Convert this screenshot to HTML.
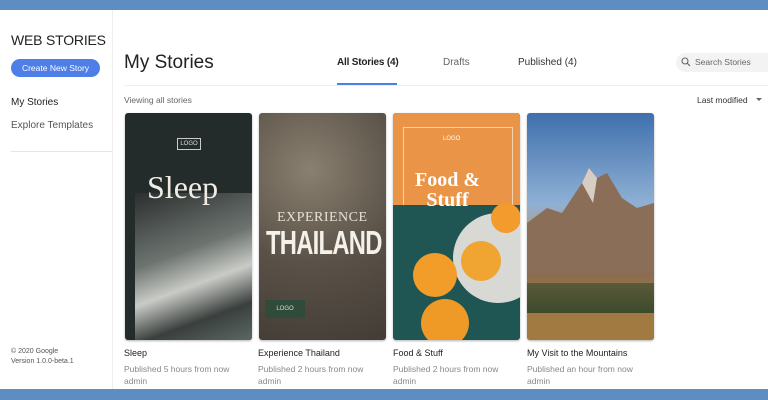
<!DOCTYPE html>
<html><head><meta charset="utf-8"><style>
*{margin:0;padding:0;box-sizing:border-box}
body{width:768px;height:400px;overflow:hidden;background:#fff;font-family:"Liberation Sans",Arial,sans-serif;position:relative;color:#222}
.bar{position:absolute;left:0;width:768px;background:#5e8dc2}
.a{position:absolute;white-space:nowrap}
.card{position:absolute;top:113px;width:127px;height:227px;border-radius:3px;overflow:hidden;box-shadow:0 1px 2px rgba(0,0,0,.3)}
.t{font-size:9px;color:#222}
.s{font-size:8.5px;color:#888}
</style></head><body>
<div class="bar" style="top:0;height:10px"></div>
<div class="bar" style="top:389px;height:11px"></div>
<div class="a" style="left:112px;top:10px;width:1px;height:379px;background:#eee"></div>
<div class="a" style="left:11px;top:32px;font-size:14px;color:#222;letter-spacing:-0.2px">WEB STORIES</div>
<div class="a" style="left:11px;top:59px;width:89px;height:18px;border-radius:9px;background:#4e7ee8;color:#fff;font-size:8.5px;text-align:center;line-height:18px">Create New Story</div>
<div class="a" style="left:11px;top:97px;font-size:10px;color:#222">My Stories</div>
<div class="a" style="left:11px;top:120px;font-size:10px;color:#555">Explore Templates</div>
<div class="a" style="left:11px;top:151px;width:101px;height:1px;background:#e6e6e6"></div>
<div class="a" style="left:11px;top:347px;font-size:7px;color:#555;line-height:10px">© 2020 Google<br>Version 1.0.0-beta.1</div>
<div class="a" style="left:124px;top:52px;font-size:19px;color:#222">My Stories</div>
<div class="a" style="left:337px;top:57px;font-size:10px;color:#222;font-weight:bold;letter-spacing:-0.2px">All Stories (4)</div>
<div class="a" style="left:337px;top:83px;width:60px;height:2px;background:#4e7ee8"></div>
<div class="a" style="left:443px;top:57px;font-size:10px;color:#666">Drafts</div>
<div class="a" style="left:518px;top:57px;font-size:10px;color:#333">Published (4)</div>
<div class="a" style="left:676px;top:53px;width:100px;height:19px;border-radius:10px;background:#f3f3f3;font-size:8.5px;color:#666;line-height:19px;padding-left:19px">Search Stories</div>
<svg class="a" style="left:681px;top:57px" width="10" height="10"><circle cx="4" cy="4" r="3" fill="none" stroke="#666" stroke-width="1.1"/><path d="M6.3 6.3L9 9" stroke="#666" stroke-width="1.2"/></svg>
<div class="a" style="left:124px;top:85px;width:644px;height:1px;background:#f0f0f0"></div>
<div class="a" style="left:124px;top:95px;font-size:8.5px;color:#666">Viewing all stories</div>
<div class="a" style="left:697px;top:95px;font-size:8.5px;color:#333">Last modified</div>
<div class="a" style="left:756px;top:98px;width:0;height:0;border-left:3px solid transparent;border-right:3px solid transparent;border-top:3px solid #666"></div>

<div class="card" style="left:125px;background:#242b2b">
 <div class="a" style="left:10px;top:80px;width:117px;height:147px;background:linear-gradient(160deg,#2b2f2e,#6d7470 40%,#c9cbc6 60%,#3a3f3d 80%,#5a6862)"></div>
 <div class="a" style="left:52px;top:25px;width:24px;height:12px;border:1px solid #ccc;color:#ddd;font-size:6px;text-align:center;line-height:10px">LOGO</div>
 <div class="a" style="left:22px;top:56px;font-family:'Liberation Serif',serif;font-size:32px;color:#f0ece4">Sleep</div>
</div>
<div class="card" style="left:259px;background:radial-gradient(circle at 40% 25%,#8a8070,#5a5248 50%,#433c35)">
 <div class="a" style="left:18px;top:97px;font-family:'Liberation Serif',serif;font-size:14px;color:#e8e2d8;letter-spacing:0.5px">EXPERIENCE</div>
 <div class="a" style="left:7px;top:111px;font-size:33px;font-weight:bold;color:#f4f0ea;transform:scaleX(0.72);transform-origin:left;letter-spacing:-1px">THAILAND</div>
 <div class="a" style="left:6px;top:187px;width:40px;height:18px;background:#2f4b3a;color:#ddd;font-size:6px;text-align:center;line-height:18px">LOGO</div>
</div>
<div class="card" style="left:393px;background:#1f5654">
 <div class="a" style="left:0;top:0;width:127px;height:92px;background:#ea9447"></div>
 <div class="a" style="left:10px;top:14px;width:110px;height:78px;border:1px solid #f6d2b0;border-bottom:none"></div>
 <div class="a" style="left:50px;top:23px;color:#fff;font-size:6px">LOGO</div>
 <div class="a" style="left:22px;top:57px;font-family:'Liberation Serif',serif;font-size:20px;font-weight:bold;color:#fff;line-height:20px;text-align:center">Food &amp;<br>Stuff</div>
 <div class="a" style="left:60px;top:100px;width:90px;height:90px;border-radius:50%;background:#d8d8d4"></div>
 <div class="a" style="left:20px;top:140px;width:44px;height:44px;border-radius:50%;background:#f29c2a"></div>
 <div class="a" style="left:68px;top:128px;width:40px;height:40px;border-radius:50%;background:#f0a533"></div>
 <div class="a" style="left:28px;top:186px;width:48px;height:48px;border-radius:50%;background:#ef9a27"></div>
 <div class="a" style="left:98px;top:90px;width:30px;height:30px;border-radius:50%;background:#f39b2c"></div>
</div>
<div class="card" style="left:527px;background:linear-gradient(180deg,#3f70ad 0%,#8fb0d4 40%,#b89a7c 55%,#8a6a4e 70%,#9a7c4a 85%,#6e5028 100%)">
 <svg class="a" style="left:0;top:50px" width="127" height="110"><path d="M0 60 L20 45 L35 50 L55 20 L62 5 L70 15 L80 10 L95 35 L110 45 L127 40 L127 110 L0 110Z" fill="#8b6e58"/><path d="M55 20 L62 5 L70 15 L66 40 Z" fill="#d8cdc2"/></svg>
 <div class="a" style="left:0;top:170px;width:127px;height:30px;background:linear-gradient(#5b5a3a,#3d4a2c)"></div>
 <div class="a" style="left:0;top:200px;width:127px;height:27px;background:#a07a40"></div>
</div>

<div class="a t" style="left:124px;top:348px">Sleep</div>
<div class="a t" style="left:258px;top:348px">Experience Thailand</div>
<div class="a t" style="left:393px;top:348px">Food &amp; Stuff</div>
<div class="a t" style="left:527px;top:348px">My Visit to the Mountains</div>
<div class="a s" style="left:124px;top:364px">Published 5 hours from now</div>
<div class="a s" style="left:258px;top:364px">Published 2 hours from now</div>
<div class="a s" style="left:393px;top:364px">Published 2 hours from now</div>
<div class="a s" style="left:527px;top:364px">Published an hour from now</div>
<div class="a s" style="left:124px;top:376px">admin</div>
<div class="a s" style="left:258px;top:376px">admin</div>
<div class="a s" style="left:393px;top:376px">admin</div>
<div class="a s" style="left:527px;top:376px">admin</div>
</body></html>
